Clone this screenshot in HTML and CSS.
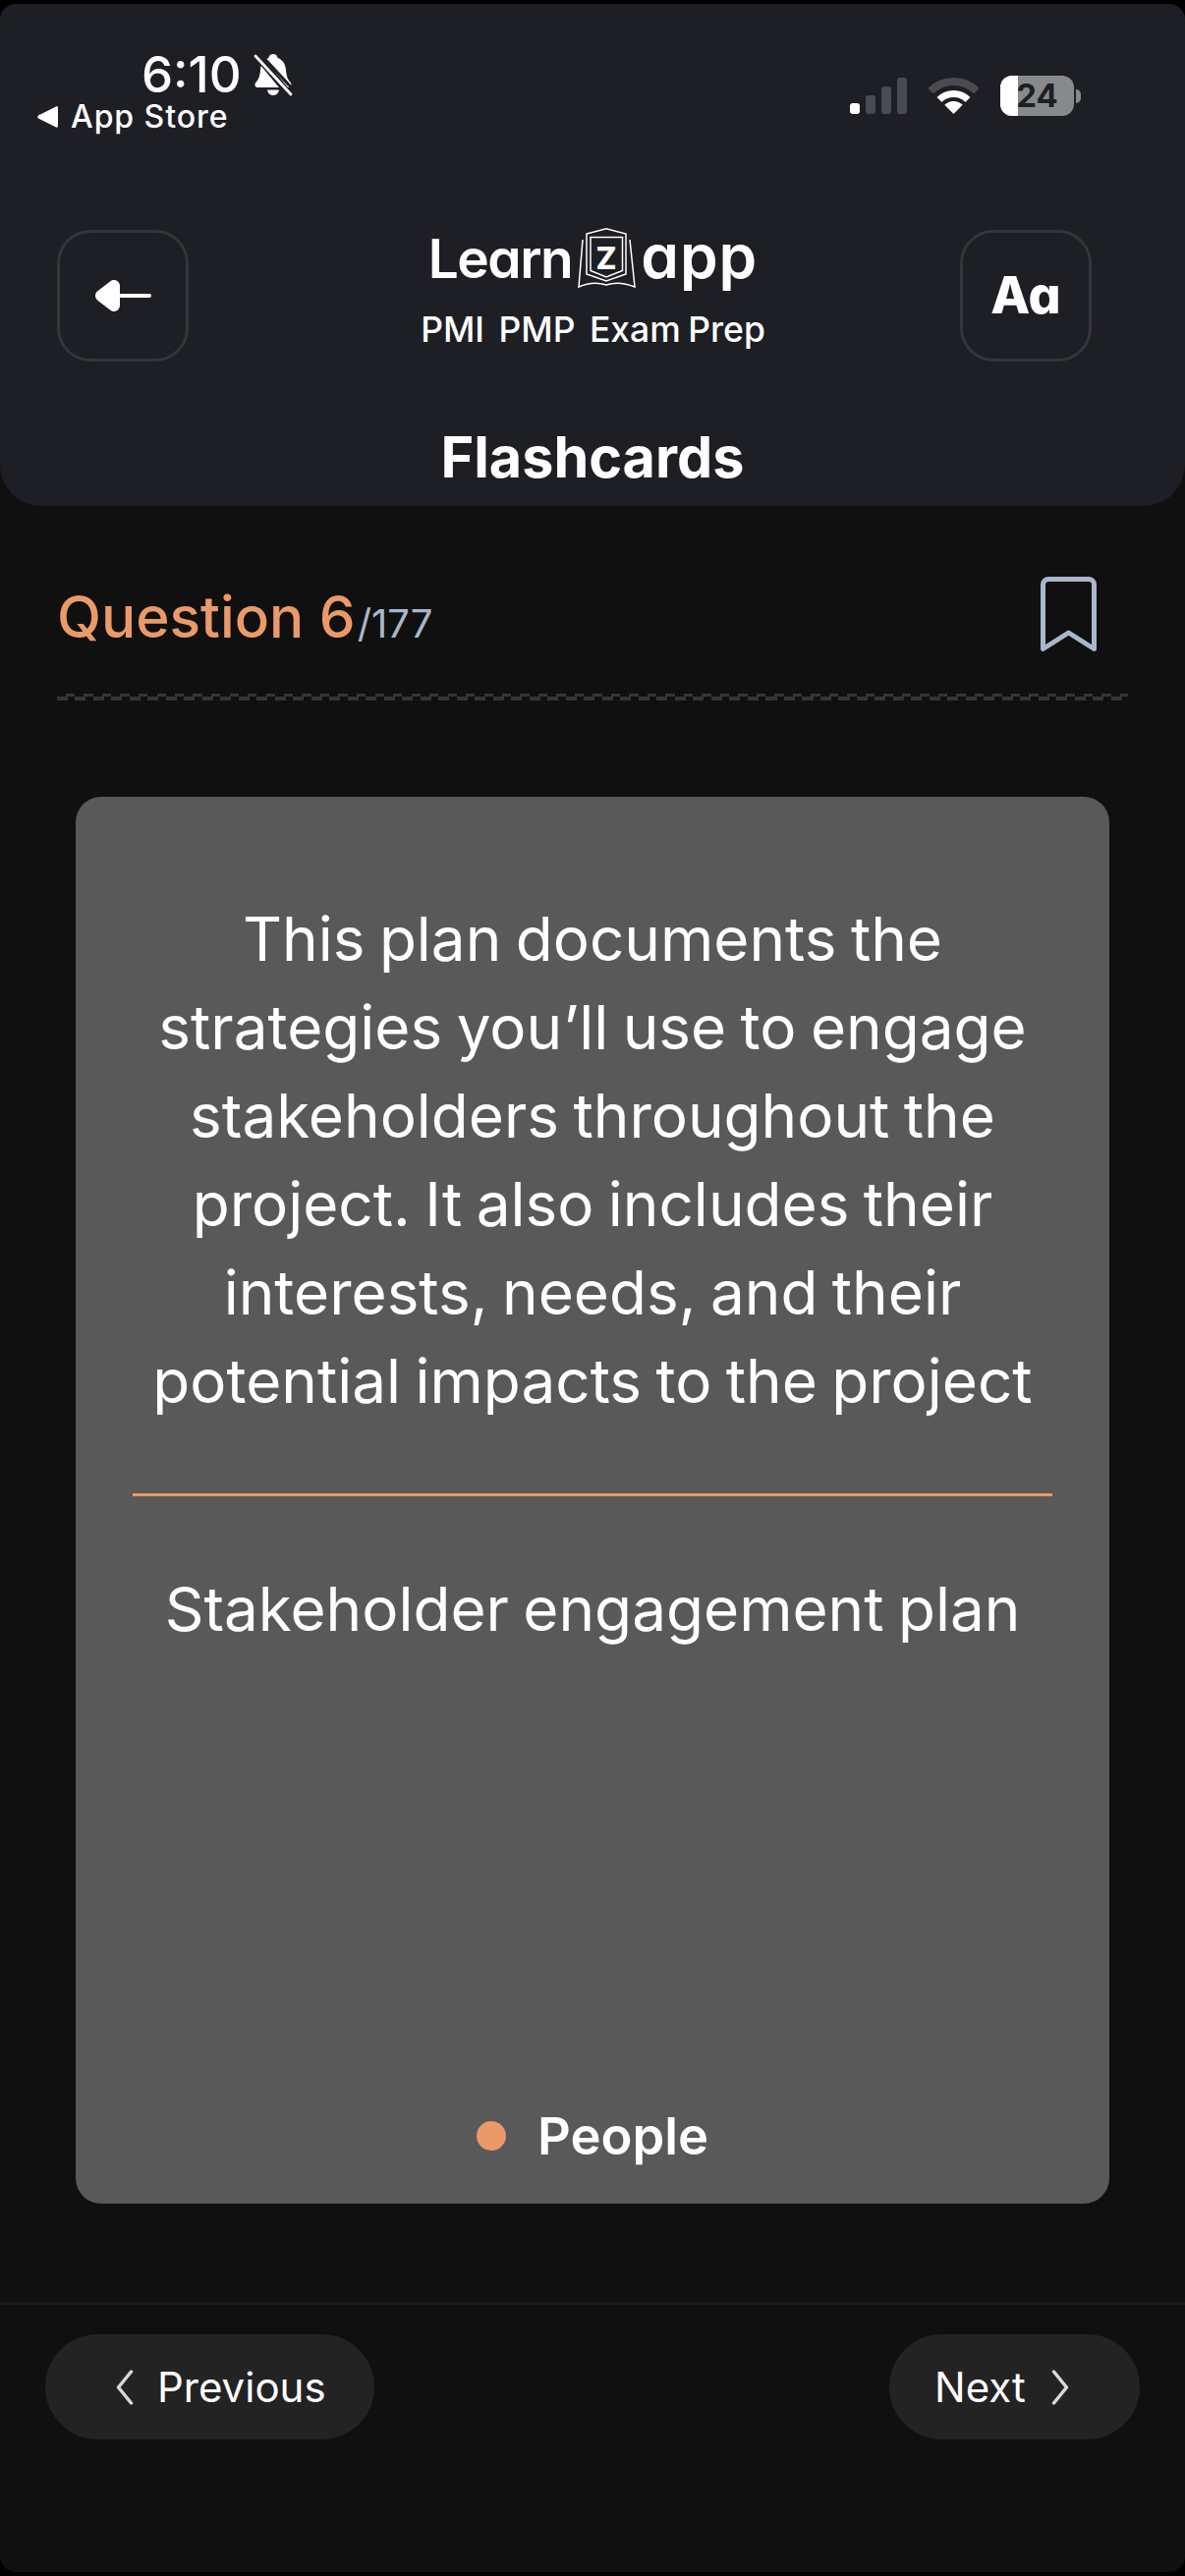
FILE: index.html
```html
<!DOCTYPE html>
<html lang="en">
<head>
<meta charset="utf-8">
<title>Flashcards</title>
<link rel="stylesheet" href="styles.css">
</head>
<body>
<div class="screen">
  <header class="header">
    <div class="status">
      <div class="status-left">
        <div class="time-row">
          <span class="time">6:10</span>
          <svg class="bell" viewBox="0 0 40 44" width="40" height="44">
            <path fill="#fff" d="M20 1c-2.400 0-4.200 1.700-4.600 3.900C10 6.700 7.500 11.500 7 17c-.5 6-1.500 9.500-4.500 12.700C.6 31.800 1.500 35 4.500 35h31c3 0 3.900-3.200 2-5.300C34.500 26.500 33.500 23 33 17c-.5-5.500-3-10.300-8.400-12.100C24.200 2.700 22.400 1 20 1zM14 37.500c.6 3.300 3 5.500 6 5.500s5.400-2.200 6-5.500z"/>
            <path stroke="#1e1f24" stroke-width="7" d="M-1 -3 L38 44"/>
            <path stroke="#fff" stroke-width="2.800" stroke-linecap="round" d="M2 3 L38 42"/>
            <path stroke="#1e1f24" stroke-width="3" d="M6 0 L42 39"/>
          </svg>
        </div>
        <div class="back-app">
          <svg class="tri" viewBox="0 0 22 22" width="22" height="22"><path fill="#fff" d="M21 1.500v19c0 1-1 1.500-2 1L1 12.500c-1-.8-1-2.200 0-3l18-9c1-.5 2 0 2 1z"/></svg>
          <span>App Store</span>
        </div>
      </div>
      <div class="status-right">
        <svg class="signal" viewBox="0 0 58 37" width="58" height="37">
          <rect x="0" y="26" width="10" height="11" rx="3" fill="#fff"/>
          <rect x="16" y="18" width="10" height="19" rx="3" fill="#4a4b50"/>
          <rect x="32" y="9" width="10" height="28" rx="3" fill="#4a4b50"/>
          <rect x="48" y="0" width="10" height="37" rx="3" fill="#4a4b50"/>
        </svg>
        <svg class="wifi" viewBox="0 0 51 37" width="51" height="37">
          <path fill="none" stroke="#4a4b50" stroke-width="8" d="M2.200 13.700A33 33 0 0 1 48.800 13.700"/>
          <path fill="none" stroke="#fff" stroke-width="7" d="M11 22.500A20.500 20.500 0 0 1 40 22.500"/>
          <path fill="#fff" d="M25.500 37L16.300 27.800A13 13 0 0 1 34.700 27.800Z"/>
        </svg>
        <div class="battery">
          <div class="battery-body"><span class="battery-fill"></span><span class="battery-num">24</span></div>
          <span class="battery-tip"></span>
        </div>
      </div>
    </div>
    <div class="nav">
      <button class="icon-btn" type="button" aria-label="Back">
        <svg viewBox="0 0 58 34" width="58" height="34">
          <path fill="#fff" stroke="#fff" stroke-width="12" stroke-linejoin="round" d="M7 17L20 7V27Z"/>
          <path stroke="#fff" stroke-width="4" stroke-linecap="round" d="M24 17H56"/>
        </svg>
      </button>
      <div class="brand">
        <div class="logo">
          <span class="logo-learn">Learn</span>
          <svg class="book" viewBox="0 0 62 62" width="62" height="62">
            <g fill="none" stroke="#fff" stroke-width="1.500">
              <path d="M11 6L31 .8L51 6V47L31 54L11 47Z"/>
              <path d="M15 9.500H47.500V43.500L31 50L15 43.500Z"/>
              <path d="M7 12L3 60C12 56 22 55 31 58C40 55 50 56 60 60L55 12"/>
            </g>
            <text x="31" y="42" class="book-z" text-anchor="middle">Z</text>
          </svg>
          <span class="logo-app">app</span>
        </div>
        <div class="sub">PMI PMP <span class="sub-tight">Exam Prep</span></div>
      </div>
      <button class="icon-btn aa" type="button">Aa</button>
    </div>
    <h1 class="title">Flashcards</h1>
  </header>

  <main class="main">
    <div class="qrow">
      <div class="qcount"><span class="qnum">Question 6</span><span class="qtotal">/177</span></div>
      <svg class="bookmark" viewBox="0 0 57 76" width="57" height="76">
        <path fill="none" stroke="#a9b7cc" stroke-width="5" stroke-linejoin="round" d="M8 2.500H49a5.500 5.500 0 0 1 5.500 5.500V73.500L28.500 57L2.500 73.500V8A5.500 5.500 0 0 1 8 2.500Z"/>
      </svg>
    </div>
    <div class="dash"></div>
    <section class="card">
      <p class="card-text">This plan documents the<br>strategies you’ll use to engage<br>stakeholders throughout the<br>project. It also includes their<br>interests, needs, and their<br>potential impacts to the project</p>
      <div class="divider"></div>
      <p class="card-text">Stakeholder engagement plan</p>
      <div class="category"><span class="dot"></span><span>People</span></div>
    </section>
  </main>

  <footer class="footer">
    <button class="pill pill-prev" type="button">
      <svg viewBox="0 0 18 36" width="18" height="36"><path fill="none" stroke="#d8d8d8" stroke-width="3.500" stroke-linecap="round" stroke-linejoin="round" d="M15.500 2L2.500 18L15.500 34"/></svg>
      <span>Previous</span>
    </button>
    <button class="pill pill-next" type="button">
      <span>Next</span>
      <svg viewBox="0 0 18 36" width="18" height="36"><path fill="none" stroke="#d8d8d8" stroke-width="3.500" stroke-linecap="round" stroke-linejoin="round" d="M2.500 2L15.500 18L2.500 34"/></svg>
    </button>
  </footer>
</div>
</body>
</html>
```
FILE: styles.css
```css
* { box-sizing: border-box; }
html, body { margin: 0; padding: 0; background: #000; }
body { width: 1206px; height: 2622px; overflow: hidden; font-family: "Inter", "Liberation Sans", sans-serif; color: #fff; }
.screen { margin: 4px 0; height: 2614px; border-radius: 16px; overflow: hidden; background: #101010; display: flex; flex-direction: column; }

.header { height: 511px; flex: none; background: #1e1f24; border-radius: 0 0 42px 42px; display: flex; flex-direction: column; }
.status { height: 230px; display: flex; justify-content: space-between; align-items: flex-start; padding: 48px 106px 0 38px; }
.status-left { display: flex; flex-direction: column; }
.time-row { display: flex; align-items: center; gap: 12px; margin-left: 106px; height: 48px; }
.time { font-size: 51px; font-weight: 500; line-height: 48px; }
.bell { display: block; }
.back-app { display: flex; align-items: center; gap: 12px; font-size: 32px; font-weight: 500; line-height: 40px; margin-top: -1px; letter-spacing: .95px; }
.tri { display: block; }
.status-right { display: flex; align-items: center; padding-top: 25px; }
.signal { display: block; margin-right: 22px; }
.wifi { display: block; margin-right: 22px; }
.battery { display: flex; align-items: center; gap: 2px; }
.battery-body { position: relative; width: 75px; height: 41px; border-radius: 12px; background: #88898d; overflow: hidden; display: flex; align-items: center; justify-content: center; }
.battery-fill { position: absolute; left: 0; top: 0; bottom: 0; width: 18px; background: #fff; }
.battery-num { position: relative; font-size: 33px; font-weight: 700; line-height: 41px; color: #1e1f24; }
.battery-tip { width: 5px; height: 14px; background: #88898d; border-radius: 0 7px 7px 0; }

.nav { display: flex; justify-content: space-between; align-items: flex-start; padding: 0 95px 0 58px; height: 134px; }
.icon-btn { width: 134px; height: 134px; flex: none; border: 3px solid #33353a; border-radius: 34px; background: transparent; color: #fff; padding: 0; display: flex; align-items: center; justify-content: center; font-family: inherit; }
.aa { font-size: 52px; font-weight: 800; font-feature-settings: "cv11"; line-height: 1; }
.brand { display: flex; flex-direction: column; align-items: center; margin-top: -2px; margin-left: 38px; }
.logo { display: flex; align-items: center; height: 62px; }
.logo-learn { font-size: 55px; font-weight: 600; line-height: 62px; font-feature-settings: "cv11"; letter-spacing: -1.500px; }
.logo-app { font-size: 62px; font-weight: 600; line-height: 62px; font-feature-settings: "cv11"; letter-spacing: 1px; margin-top: -4px; }
.book { display: block; margin: 0 4px; }
.book-z { font-family: "Inter", sans-serif; font-size: 31px; font-weight: 800; fill: #fff; }
.sub { font-size: 35.500px; font-weight: 500; line-height: 44px; word-spacing: 5px; margin-top: 20px; white-space: nowrap; }
.sub-tight { word-spacing: -2px; }
.title { margin: 63px 0 0; font-size: 57.500px; font-weight: 700; line-height: 68px; text-align: center; }

.main { flex: 1; display: flex; flex-direction: column; }
.qrow { display: flex; justify-content: space-between; align-items: flex-start; padding: 68px 90px 0 58px; height: 191px; }
.qcount { display: flex; align-items: baseline; padding-top: 7px; line-height: 76px; }
.qnum { font-size: 58.500px; font-weight: 500; color: #ea9a68; }
.qtotal { font-size: 40px; color: #a9b7cc; margin-left: 2px; }
.bookmark { display: block; margin-top: 4px; }
.dash { height: 7px; margin: 0 58px; flex: none;
  background:
    repeating-linear-gradient(90deg, transparent 0 9px, #33353a 9px 18.500px) top / 100% 3px no-repeat,
    repeating-linear-gradient(90deg, #33353a 0 11px, transparent 11px 18.500px) bottom / 100% 4px no-repeat;
}
.card { margin: 98px 77px 0; height: 1432px; flex: none; background: #595959; border-radius: 26px; padding: 100px 58px 39px; display: flex; flex-direction: column; align-items: stretch; }
.card-text { margin: 0; font-size: 62px; word-spacing: -3px; line-height: 90px; text-align: center; font-weight: 400; }
.divider { height: 3px; background: #ea9a68; margin: 69px 0 70px; flex: none; }
.category { margin-top: auto; display: flex; align-items: center; justify-content: center; gap: 32px; font-size: 52.500px; font-weight: 600; line-height: 60px; }
.dot { width: 30px; height: 30px; border-radius: 50%; background: #ea9a68; }

.footer { flex: 1; margin-top: 100px; border-top: 3px solid #1a1a1a; padding: 30px 46px 0; display: flex; justify-content: space-between; align-items: flex-start; }
.pill { height: 107px; border: 0; border-radius: 54px; background: #232323; color: #fff; display: flex; align-items: center; font-family: inherit; font-size: 42px; font-weight: 400; padding: 0; }
.pill-prev { width: 335px; padding-left: 72px; gap: 24px; }
.pill-next { width: 255px; padding-left: 46px; gap: 26px; }
```
